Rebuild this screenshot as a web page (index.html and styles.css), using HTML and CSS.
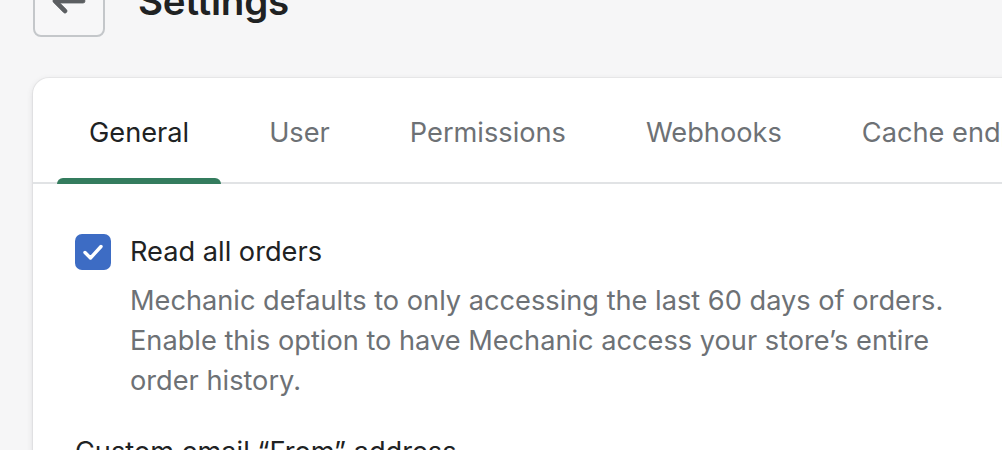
FILE: index.html
```html
<!DOCTYPE html>
<html lang="en">
<head>
<meta charset="utf-8">
<title>Settings</title>
<link rel="stylesheet" href="styles.css">
</head>
<body>
<div class="page">
  <header class="page-header">
    <button class="back-btn" aria-label="Back">
      <svg viewBox="0 0 20 20" width="40" height="40"><path fill="#5c5f62" stroke="#5c5f62" stroke-width="0.4" stroke-linejoin="round" d="M17 9H5.414l3.293-3.293a.999.999 0 1 0-1.414-1.414l-5 5a.999.999 0 0 0 0 1.414l5 5a.997.997 0 0 0 1.414 0 .999.999 0 0 0 0-1.414L5.414 11H17a1 1 0 1 0 0-2z"/></svg>
    </button>
    <h1 class="page-title">Settings</h1>
  </header>

  <section class="card">
    <ul class="tabs">
      <li class="tab tab-active">General<span class="indicator"></span></li>
      <li class="tab">User</li>
      <li class="tab">Permissions</li>
      <li class="tab">Webhooks</li>
      <li class="tab">Cache endpoints</li>
    </ul>
    <div class="card-body">
      <div class="check-row">
        <span class="checkbox">
          <svg viewBox="0 0 36 36" width="36" height="36"><path d="M10 18.5l5.5 5.5L26 12.5" fill="none" stroke="#fff" stroke-width="3.4" stroke-linecap="round" stroke-linejoin="round"/></svg>
        </span>
        <div class="check-text">
          <div class="check-label">Read all orders</div>
          <p class="help">Mechanic defaults to only accessing the last 60 days of orders. Enable this option to have Mechanic access your store’s entire order history.</p>
        </div>
      </div>
      <div class="field-label">Custom email “From” address</div>
    </div>
  </section>
</div>
</body>
</html>
```

FILE: styles.css
```css
html, body {
  margin: 0;
  padding: 0;
  overflow: hidden;
}
body {
  background: #f6f6f7;
  font-family: Inter, "Noto Sans", sans-serif;
  color: #202223;
  width: 1002px;
  height: 450px;
}
.page {
  padding-left: 33px;
}
.page-header {
  display: flex;
  align-items: center;
  gap: 33px;
  margin-top: -35px;
  height: 72px;
}
.back-btn {
  width: 72px;
  height: 72px;
  box-sizing: border-box;
  border: 2px solid #c4c7ca;
  border-radius: 8px;
  background: #f7f7f8;
  display: flex;
  align-items: center;
  justify-content: center;
  padding: 0;
}
.page-title {
  margin: 0;
  font-size: 38.5px;
  line-height: 56px;
  font-weight: 600;
  letter-spacing: -0.2px;
  color: #202223;
}
.card {
  margin-top: 41px;
  width: 1100px;
  background: #fff;
  border-radius: 16px 0 0 0;
  box-shadow: 0 0 0 1px rgba(63,63,68,0.05), 0 2px 6px 0 rgba(63,63,68,0.15);
  height: 500px;
}
.tabs {
  list-style: none;
  margin: 0;
  padding: 0 0 0 24px;
  display: flex;
  gap: 16px;
  border-bottom: 2px solid #e1e3e5;
}
.tab {
  position: relative;
  padding: 35px 32px 29px;
  font-size: 27.2px;
  line-height: 40px;
  color: #6d7175;
  white-space: nowrap;
}
.tab-active {
  color: #202223;
}
.indicator {
  position: absolute;
  left: 0;
  right: 0;
  bottom: -2px;
  height: 6px;
  background: #347c5e;
  border-radius: 6px 6px 0 0;
}
.card-body {
  padding: 48px 42px 0;
}
.check-row {
  display: flex;
  align-items: flex-start;
  gap: 19px;
}
.checkbox {
  flex: none;
  width: 36px;
  height: 36px;
  margin-top: 2px;
  border-radius: 7px;
  background: #3d6cc4;
  display: block;
}
.checkbox svg {
  display: block;
}
.check-label {
  font-size: 27.2px;
  line-height: 40px;
  color: #202223;
}
.help {
  margin: 9px 0 0;
  font-size: 27.2px;
  line-height: 40px;
  color: #6d7175;
  max-width: 830px;
}
.field-label {
  margin-top: 31px;
  font-size: 27.2px;
  line-height: 40px;
  color: #202223;
}
```
